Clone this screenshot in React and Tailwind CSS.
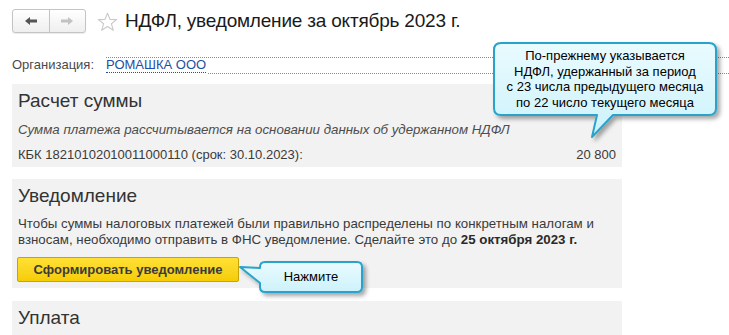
import React from "react";

const Arrow = ({ dir, color }) => (
  <svg width="14" height="10" viewBox="0 0 14 10" style={{ transform: dir === "right" ? "scaleX(-1)" : "none" }}>
    <path d="M1 5 L6 1 V3.5 H13 V6.5 H6 V9 Z" fill={color} />
  </svg>
);

const Star = () => (
  <svg width="21" height="20" viewBox="0 0 21 20">
    <polygon
      points="10.5,1.2 13,7.4 19.6,7.6 14.4,11.7 16.3,18.3 10.5,14.5 4.7,18.3 6.6,11.7 1.4,7.6 8,7.4"
      fill="none"
      stroke="#c9c9c9"
      strokeWidth="1.1"
      strokeLinejoin="round"
    />
  </svg>
);

// callout bubbles: shape drawn in svg, text laid over it
const Callout = ({ className, w, h, d, box, children }) => (
  <div className={`absolute ${className}`} style={{ width: w, height: h }}>
    <svg width={w} height={h} className="absolute left-0 top-0 overflow-visible">
      <defs>
        <filter id="cs" x="-20%" y="-20%" width="140%" height="150%">
          <feDropShadow dx="3" dy="3" stdDeviation="2" floodColor="#000" floodOpacity="0.35" />
        </filter>
        <linearGradient id="cg" x1="0" y1="0" x2="0" y2="1">
          <stop offset="0" stopColor="#e9fbff" />
          <stop offset="1" stopColor="#cdf2fb" />
        </linearGradient>
      </defs>
      <path d={d} fill="url(#cg)" stroke="#2aa3cc" strokeWidth="2" strokeLinejoin="round" filter="url(#cs)" />
    </svg>
    <div
      className="absolute flex items-center justify-center text-center text-[13px] leading-[15.5px] text-black"
      style={box}
    >
      {children}
    </div>
  </div>
);

export default function App() {
  return (
    <div className="relative w-[729px] h-[335px] overflow-hidden bg-white font-['Liberation_Sans',Arial,sans-serif]">
      <div className="pl-3 pt-[9px]">
        {/* header */}
        <div className="flex items-center h-6">
          <div className="flex h-6 w-[74px] rounded-[3px] border border-[#c4c4c4] bg-gradient-to-b from-white to-[#efefef] shadow-[0_1px_1px_rgba(0,0,0,0.08)]">
            <div className="flex flex-1 items-center justify-center border-r border-[#c4c4c4]">
              <Arrow dir="left" color="#555" />
            </div>
            <div className="flex flex-1 items-center justify-center">
              <Arrow dir="right" color="#c2c2c2" />
            </div>
          </div>
          <div className="ml-[11px] mt-[1px]"><Star /></div>
          <h1 className="ml-[7px] text-[19px] tracking-[-0.2px] leading-6 text-[#1a1a1a]">НДФЛ, уведомление за октябрь 2023 г.</h1>
        </div>

        {/* organisation */}
        <div className="mt-[24px] flex items-center h-[16px]">
          <span className="w-[94px] text-[13px] text-[#4a4a4a]">Организация:</span>
          <div className="flex-1 h-[16px] border-y border-dotted border-[#8a8a8a] border-b-0 relative">
            <span className="absolute left-0 top-[-1px] text-[13px] leading-[15px] text-[#1c4fa6] border-b border-dotted border-[#1c4fa6]">
              РОМАШКА ООО
            </span>
            <div className="absolute left-[102px] right-0 bottom-[-1px] border-b border-dotted border-[#8a8a8a]" />
          </div>
        </div>

        {/* Расчет суммы */}
        <div className="mt-[11px] w-[610px] bg-[#f2f2f2] px-[6px] pt-[6px] pb-[4px]">
          <h2 className="text-[19px] leading-[22px] text-[#333]">Расчет суммы</h2>
          <p className="mt-[10px] text-[13.3px] leading-4 italic text-[#4d4d4d]">
            Сумма платежа рассчитывается на основании данных об удержанном НДФЛ
          </p>
          <div className="mt-[9px] flex justify-between text-[13px] leading-4 text-[#3a3a3a]">
            <span>КБК 18210102010011000110 (срок: 30.10.2023):</span>
            <span>20 800</span>
          </div>
        </div>

        {/* Уведомление */}
        <div className="mt-[12px] w-[610px] bg-[#f2f2f2] px-[6px] pt-[6px] pb-[6px]">
          <h2 className="text-[19px] leading-[22px] text-[#333]">Уведомление</h2>
          <p className="mt-[9px] text-[13.3px] leading-4 text-[#3a3a3a]">
            Чтобы суммы налоговых платежей были правильно распределены по конкретным налогам и
            взносам, необходимо отправить в ФНС уведомление. Сделайте это до{" "}
            <b className="text-[#2a2a2a]">25 октября 2023 г.</b>
          </p>
          <button className="mt-[9px] ml-[-1px] flex h-[25px] w-[222px] items-center justify-center rounded-[2px] border border-[#c9a300] bg-gradient-to-b from-[#ffe033] to-[#f5cd00] text-[13px] font-bold text-[#3b3b3b]">
            Сформировать уведомление
          </button>
        </div>

        {/* Уплата */}
        <div className="mt-[13px] h-[40px] w-[610px] bg-[#f2f2f2] px-[6px] pt-[6px]">
          <h2 className="text-[19px] leading-[22px] text-[#333]">Уплата</h2>
        </div>
      </div>

      <Callout
        className="left-[488px] top-[38px]"
        w={240}
        h={104}
        d="M13,5 H221 Q228,5 228,12 V70 Q228,77 221,77 H125 L104,99 L109,77 H13 Q6,77 6,70 V12 Q6,5 13,5 Z"
        box={{ left: 6, top: 5, width: 222, height: 72 }}
      >
        По-прежнему указывается
        <br />
        НДФЛ, удержанный за период
        <br />
        с 23 числа предыдущего месяца
        <br />
        по 22 число текущего месяца
      </Callout>

      <Callout
        className="left-[234px] top-[256px]"
        w={136}
        h={44}
        d="M31,6 H123 Q128,6 128,11 V31 Q128,36 123,36 H31 Q26,36 26,31 V27 L6,11 L26,12 V11 Q26,6 31,6 Z"
        box={{ left: 26, top: 6, width: 102, height: 30 }}
      >
        Нажмите
      </Callout>
    </div>
  );
}
